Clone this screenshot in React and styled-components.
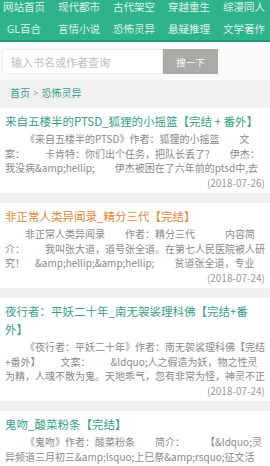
import styled, { createGlobalStyle } from "styled-components";

const GlobalStyle = createGlobalStyle`
  body {
    margin: 0;
    background: #f0f0f0;
    font-family: "Noto Sans CJK SC", "Liberation Sans", sans-serif;
    text-spacing-trim: space-all;
  }
`;

// navigation
const Nav = styled.nav`
  display: grid;
  grid-template-columns: repeat(5, 44px);
  grid-template-rows: 22px 22px;
  align-content: end;
  column-gap: 11px;
  height: 40px;
  padding-left: 2px;
  overflow: hidden;
  background: #2eb38b;
  border-bottom: 2px solid #1f9c77;
`;

const NavItem = styled.a`
  font-size: 10.5px;
  line-height: 22px;
  text-align: center;
  white-space: nowrap;
  color: rgba(255, 255, 255, 0.86);
  text-decoration: none;
`;

// search
const SearchBar = styled.form`
  display: flex;
  padding: 7px 2px 6px;
  background: #fafafa;
`;

const SearchInput = styled.input`
  width: 161px;
  height: 25px;
  box-sizing: border-box;
  padding: 0 8px;
  border: 1px solid #f0f0f0;
  background: #fff;
  font-family: inherit;
  font-size: 11px;
  color: #333;
  outline: none;

  &::placeholder {
    color: #bdbdbd;
  }
`;

const SearchButton = styled.button`
  width: 55px;
  height: 25px;
  border: none;
  background: #a9aba7;
  color: #fff;
  font-family: inherit;
  font-size: 9.5px;
`;

// breadcrumb
const Crumbs = styled.div`
  height: 28px;
  padding-left: 10px;
  line-height: 26px;
  font-size: 10px;
  color: #3a9d86;
  background: #f1f1f1;

  span {
    margin: 0 3px;
    color: #8aa;
  }
`;

// list
const List = styled.div`
  display: flex;
  flex-direction: column;
  gap: 10px;
`;

const Card = styled.article`
  padding: 4px 5px 3px;
  background: #fff;
`;

const Title = styled.h3`
  margin: 0 0 2px;
  font-size: 11.5px;
  font-weight: normal;
  line-height: 18px;
  color: ${(p) => (p.$hot ? "#e4883a" : "#3a9f87")};
`;

const Summary = styled.p`
  margin: 0;
  font-size: 10px;
  line-height: 14.5px;
  text-indent: 2em;
  color: #8a8a8a;
`;

const Date = styled.div`
  font-size: 10px;
  line-height: 14.5px;
  text-align: right;
  color: #9a9a9a;
`;

const navs = [
  "网站首页", "现代都市", "古代架空", "穿越重生", "综漫同人",
  "GL百合", "言情小说", "恐怖灵异", "悬疑推理", "文学著作",
];

const books = [
  {
    title: "来自五楼半的PTSD_狐狸的小摇篮【完结 + 番外】",
    text: "《来自五楼半的PTSD》作者：狐狸的小摇篮　　文案：　　卡肯特：你们出个任务，把队长丢了?　　伊杰：我没病&amp;hellip;　　伊杰被困在了六年前的ptsd中,去",
    date: "(2018-07-26)",
  },
  {
    title: "非正常人类异闻录_精分三代【完结】",
    text: "非正常人类异闻录　　作者：精分三代　　　内容简介：　　我叫张大道，道号张全道。在第七人民医院被人研究！　&amp;hellip;&amp;hellip;　　贫道张全道，专业",
    date: "(2018-07-24)",
    hot: true,
  },
  {
    title: "夜行者：平妖二十年_南无袈裟理科佛【完结+番外】",
    text: "《夜行者：平妖二十年》作者：南无袈裟理科佛【完结+番外】　　文案：　　&ldquo;人之假造为妖，物之性灵为精，人魂不散为鬼。天地乖气，忽有非常为怪，神灵不正",
    date: "(2018-07-24)",
  },
  {
    title: "鬼吻_酸菜粉条【完结】",
    text: "《鬼吻》作者：酸菜粉条　　简介：　　【&ldquo;灵异频道三月初三&amp;lsquo;上巳祭&amp;rsquo;征文活",
    date: "(2018-07-22)",
  },
];

const App = () => {
  return (
    <>
      <GlobalStyle />
      <Nav>
        {navs.map((n) => (
          <NavItem key={n} href="#">
            {n}
          </NavItem>
        ))}
      </Nav>

      <SearchBar onSubmit={(e) => e.preventDefault()}>
        <SearchInput placeholder="输入书名或作者查询" />
        <SearchButton type="submit">搜一下</SearchButton>
      </SearchBar>

      <Crumbs>
        首页<span>&gt;</span>恐怖灵异
      </Crumbs>

      <List>
        {books.map((b) => (
          <Card key={b.title}>
            <Title $hot={b.hot}>{b.title}</Title>
            <Summary>{b.text}</Summary>
            <Date>{b.date}</Date>
          </Card>
        ))}
      </List>
    </>
  );
};

export default App;
